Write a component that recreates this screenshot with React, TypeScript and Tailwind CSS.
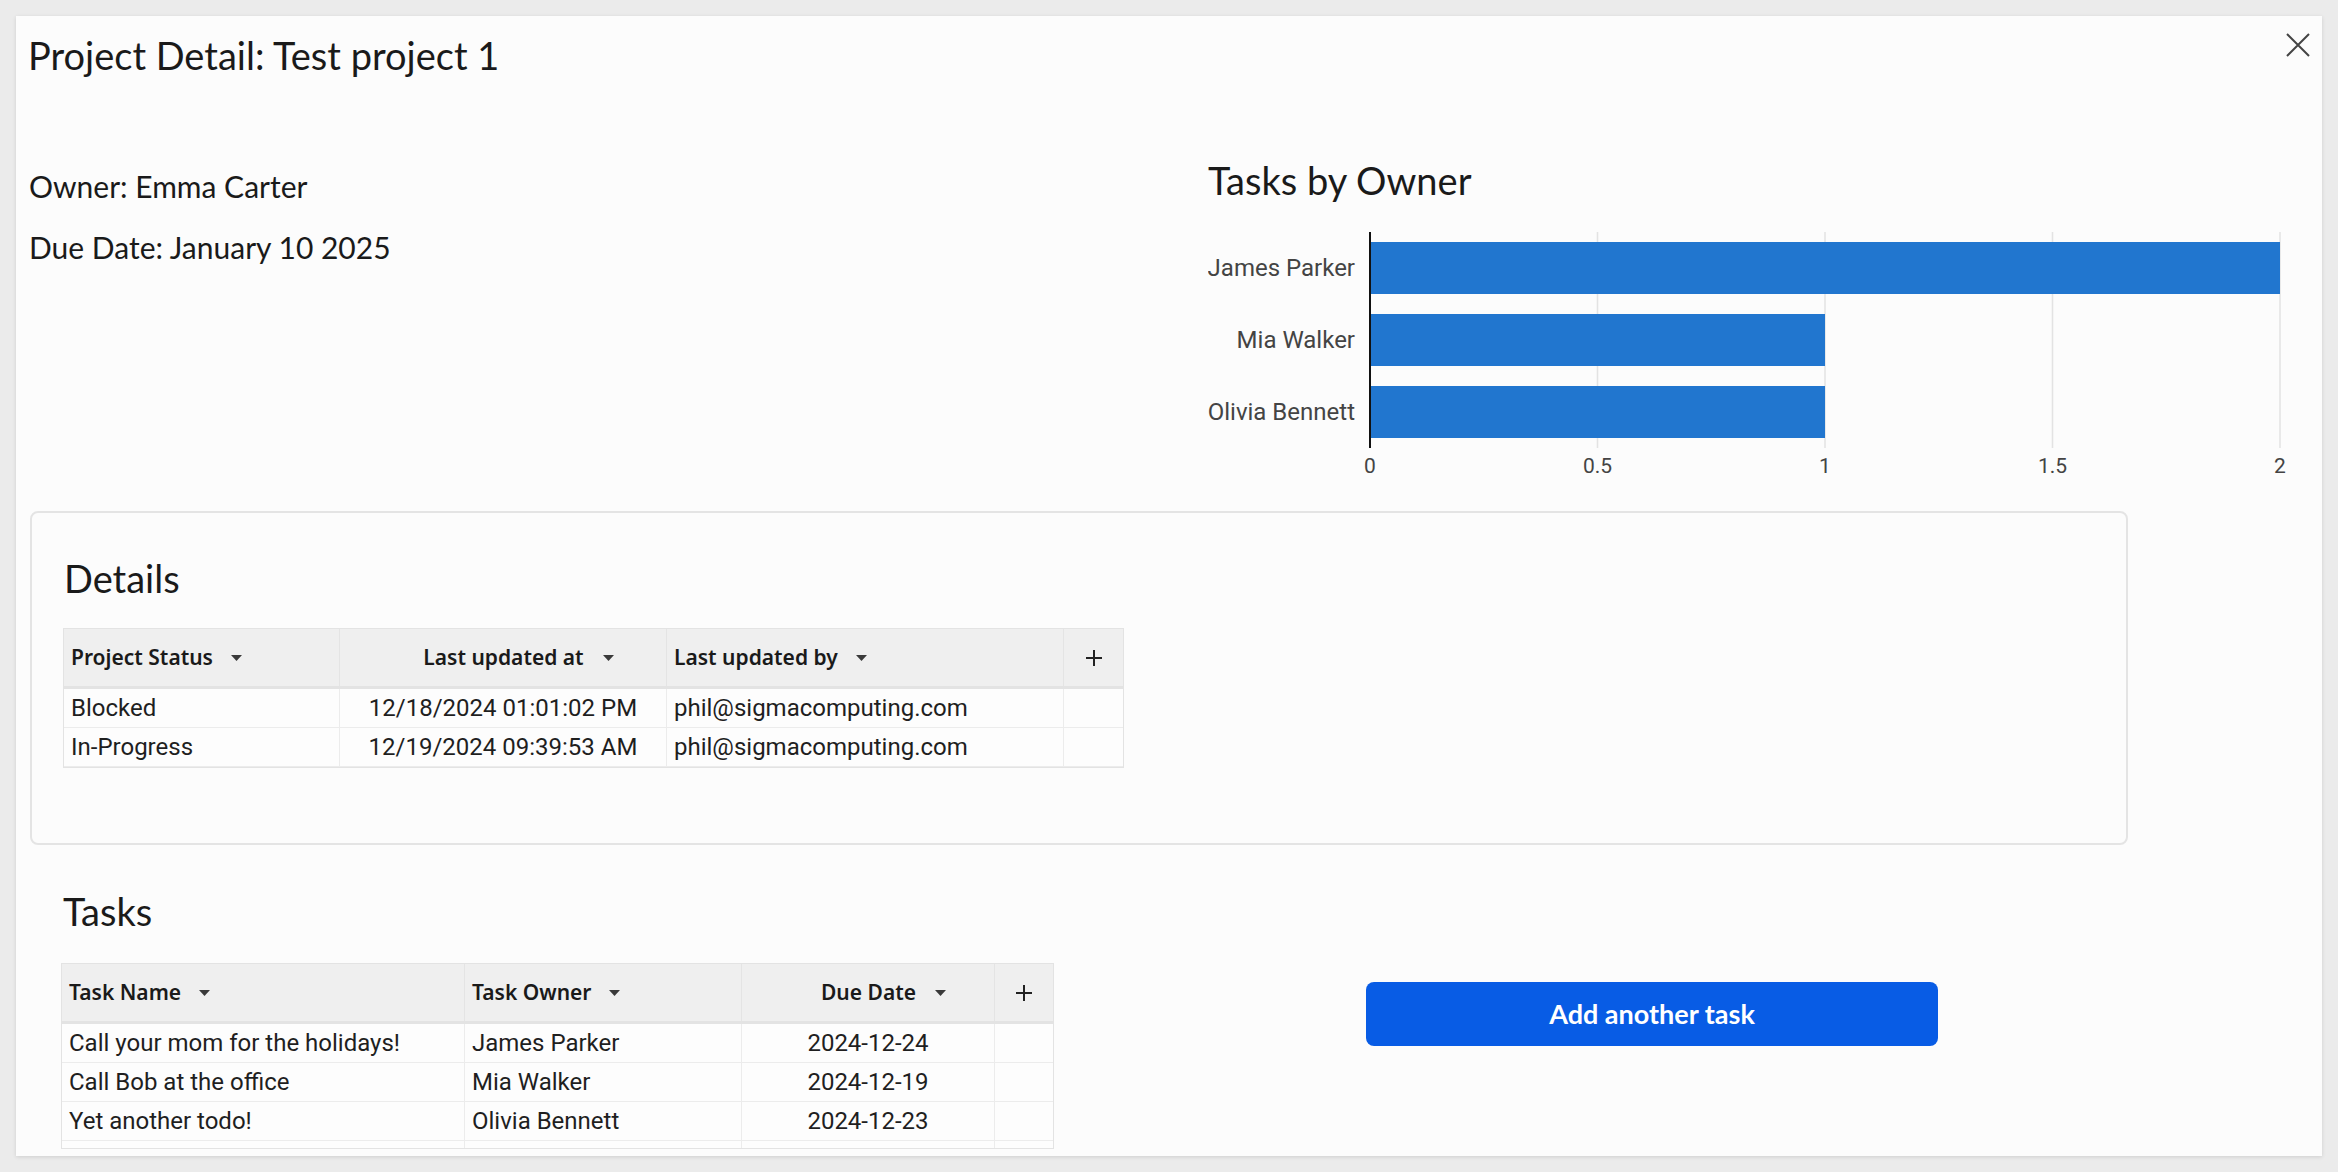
import React from "react";

type Col = { label: string; w: number; align: "left" | "center" };

const Caret = () => (
  <svg width="11" height="6" viewBox="0 0 11 6" className="shrink-0">
    <path d="M0 0H11L5.5 6Z" fill="#3a3a3a" />
  </svg>
);

const Plus = () => (
  <svg width="16" height="16" viewBox="0 0 16 16">
    <path d="M8 0V16M0 8H16" stroke="#222" strokeWidth="2" />
  </svg>
);

function DataTable({
  cols,
  rows,
  plusW,
  height,
}: {
  cols: Col[];
  rows: string[][];
  plusW: number;
  height?: number;
}) {
  return (
    <div
      className="border border-[#e3e3e3] overflow-hidden w-fit"
      style={height ? { height } : undefined}
    >
      <div className="flex h-[60px] bg-[#efefef] border-b-[3px] border-[#e3e3e3]">
        {cols.map((c) => (
          <div
            key={c.label}
            style={{ width: c.w }}
            className={
              c.align === "left"
                ? "flex items-center gap-[18px] pl-[7px] border-r border-[#e4e4e4]"
                : "flex items-center justify-center gap-[19px] pl-[31px] border-r border-[#e4e4e4]"
            }
          >
            <span className="font-['Noto_Sans',sans-serif] font-semibold text-[21px] text-[#1a1a1a] whitespace-nowrap">
              {c.label}
            </span>
            <Caret />
          </div>
        ))}
        <div style={{ width: plusW }} className="flex items-center justify-center">
          <Plus />
        </div>
      </div>
      {rows.map((r, i) => (
        <div key={i} className="flex h-[39px] bg-[#fdfdfd] border-b border-[#ececec]">
          {cols.map((c, j) => (
            <div
              key={j}
              style={{ width: c.w }}
              className={
                c.align === "left"
                  ? "flex items-center pl-[7px] border-r border-[#ececec]"
                  : "flex items-center justify-center border-r border-[#ececec]"
              }
            >
              <span className="font-[Roboto,sans-serif] text-[24px] text-[#1f1f1f] whitespace-nowrap">
                {r[j]}
              </span>
            </div>
          ))}
          <div style={{ width: plusW }} />
        </div>
      ))}
    </div>
  );
}

function Chart() {
  const x0 = 162;
  const unit = 455;
  const data = [
    { name: "James Parker", v: 2 },
    { name: "Mia Walker", v: 1 },
    { name: "Olivia Bennett", v: 1 },
  ];
  const ticks = [0, 0.5, 1, 1.5, 2];
  return (
    <svg width="1092" height="250" className="block mt-[28px]">
      {ticks.slice(1).map((t) => (
        <line
          key={t}
          x1={x0 + t * unit}
          x2={x0 + t * unit}
          y1={0}
          y2={216}
          stroke="#e3e3e3"
          strokeWidth="1.5"
        />
      ))}
      {data.map((d, i) => (
        <g key={d.name}>
          <rect x={x0 + 1} y={10 + i * 72} width={d.v * unit - 1} height={52} fill="#2176cf" />
          <text
            x={147}
            y={44 + i * 72}
            textAnchor="end"
            fontFamily="Roboto, sans-serif"
            fontSize="24"
            fill="#444"
          >
            {d.name}
          </text>
        </g>
      ))}
      <line x1={x0} x2={x0} y1={0} y2={216} stroke="#111" strokeWidth="2" />
      {ticks.map((t) => (
        <text
          key={t}
          x={x0 + t * unit}
          y={241}
          textAnchor="middle"
          fontFamily="Roboto, sans-serif"
          fontSize="21"
          fill="#444"
        >
          {t}
        </text>
      ))}
    </svg>
  );
}

export default function App() {
  return (
    <div className="w-[2338px] h-[1172px] bg-[#ebebeb] p-4 overflow-hidden">
      <div className="h-[1140px] bg-[#fcfcfc] shadow-[0_1px_4px_rgba(0,0,0,0.12)] overflow-hidden pl-[14px] pr-[12px] pt-4 text-[#1a1a1a]">
        <div className="flex justify-between items-start">
          <h1 className="font-[Lato,sans-serif] text-[38px] leading-[47px] -ml-[2px]">
            Project Detail: Test project 1
          </h1>
          <button className="mt-px w-6 h-6 block" aria-label="Close">
            <svg width="24" height="24" viewBox="0 0 24 24">
              <path d="M1 1L23 23M23 1L1 23" stroke="#444" strokeWidth="2" />
            </svg>
          </button>
        </div>

        <div className="grid grid-cols-[1178px_1fr] mt-[78px]">
          <div className="pt-[11px] font-[Lato,sans-serif] text-[30px] leading-[37px] -ml-px">
            <p>Owner: Emma Carter</p>
            <p className="mt-6">Due Date: January 10 2025</p>
          </div>
          <div>
            <h2 className="font-[Lato,sans-serif] text-[38px] leading-[47px]">Tasks by Owner</h2>
            <Chart />
          </div>
        </div>

        <section className="mt-[29px] w-[2098px] h-[334px] border-2 border-[#e4e4e4] rounded-lg pl-[31px] pt-[42px]">
          <h2 className="font-[Lato,sans-serif] text-[38px] leading-[47px] pl-px">Details</h2>
          <div className="mt-[26px]">
            <DataTable
              cols={[
                { label: "Project Status", w: 276, align: "left" },
                { label: "Last updated at", w: 327, align: "center" },
                { label: "Last updated by", w: 397, align: "left" },
              ]}
              rows={[
                ["Blocked", "12/18/2024 01:01:02 PM", "phil@sigmacomputing.com"],
                ["In-Progress", "12/19/2024 09:39:53 AM", "phil@sigmacomputing.com"],
              ]}
              plusW={59}
            />
          </div>
        </section>

        <section className="mt-[43px] ml-[31px] flex items-start">
          <div>
            <h2 className="font-[Lato,sans-serif] text-[38px] leading-[47px] pl-[2px]">Tasks</h2>
            <div className="mt-7">
              <DataTable
                cols={[
                  { label: "Task Name", w: 403, align: "left" },
                  { label: "Task Owner", w: 277, align: "left" },
                  { label: "Due Date", w: 253, align: "center" },
                ]}
                rows={[
                  ["Call your mom for the holidays!", "James Parker", "2024-12-24"],
                  ["Call Bob at the office", "Mia Walker", "2024-12-19"],
                  ["Yet another todo!", "Olivia Bennett", "2024-12-23"],
                  ["", "", ""],
                ]}
                plusW={58}
                height={186}
              />
            </div>
          </div>
          <button className="ml-[312px] mt-[94px] w-[572px] h-16 rounded-lg bg-[#085ce5] text-white font-[Lato,sans-serif] font-bold text-[27px]">
            Add another task
          </button>
        </section>
      </div>
    </div>
  );
}
